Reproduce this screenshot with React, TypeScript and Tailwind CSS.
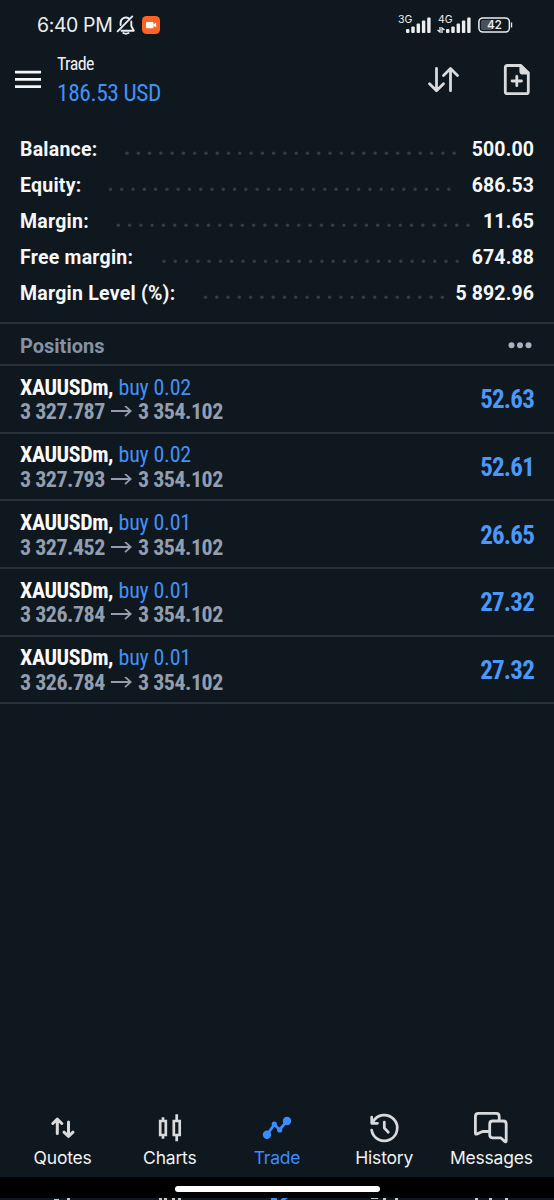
import type { ReactNode } from "react";

interface Stat {
  label: string;
  value: string;
}

interface Position {
  volume: string;
  open: string;
  current: string;
  profit: string;
}

const stats: Stat[] = [
  { label: "Balance:", value: "500.00" },
  { label: "Equity:", value: "686.53" },
  { label: "Margin:", value: "11.65" },
  { label: "Free margin:", value: "674.88" },
  { label: "Margin Level (%):", value: "5 892.96" },
];

const dots = [
  { start: 127, count: 30 },
  { start: 110.5, count: 31 },
  { start: 118.3, count: 32 },
  { start: 164, count: 27 },
  { start: 205.5, count: 22 },
];

const positions: Position[] = [
  { volume: "0.02", open: "3 327.787", current: "3 354.102", profit: "52.63" },
  { volume: "0.02", open: "3 327.793", current: "3 354.102", profit: "52.61" },
  { volume: "0.01", open: "3 327.452", current: "3 354.102", profit: "26.65" },
  { volume: "0.01", open: "3 326.784", current: "3 354.102", profit: "27.32" },
  { volume: "0.01", open: "3 326.784", current: "3 354.102", profit: "27.32" },
];

function Signal() {
  return (
    <svg className="h-4 w-[25px]" viewBox="0 0 25 16" fill="#eceef0">
      <rect x="0" y="12" width="3.4" height="4" rx="1" />
      <rect x="5.3" y="9.5" width="3.4" height="6.5" rx="1" />
      <rect x="10.6" y="6.5" width="3.4" height="9.5" rx="1" />
      <rect x="15.9" y="3.5" width="3.4" height="12.5" rx="1" />
      <rect x="21.2" y="0.5" width="3.4" height="15.5" rx="1" />
    </svg>
  );
}

function StatusBar() {
  return (
    <div className="flex h-[50px] items-center pl-[37px] text-[#eceef0]">
      <span className="mt-px w-[79px] font-[Inter,sans-serif] text-[19.5px] tracking-[-0.4px] whitespace-nowrap">
        6:40 PM
      </span>
      <svg className="h-5 w-5" viewBox="0 0 20 20" fill="none" stroke="#eceef0" strokeWidth="1.9" strokeLinecap="round" strokeLinejoin="round">
        <path d="M1.6 16.3 16.3 1.4M4.6 10V8A5.3 5.3 0 0 1 12.5 3.2M15.3 6.5V11l2.5 4.7H5.5" />
        <path d="M7.3 18q2.600 1.400 5.200 0" />
      </svg>
      <svg className="ml-[6px] h-[18px] w-[18px]" viewBox="0 0 18 18">
        <rect width="18" height="18" rx="4.5" fill="#fb6425" />
        <rect x="4" y="6" width="7.5" height="6.2" rx="1" fill="white" />
        <path d="m11.5 8.5 2.7-1.9v5l-2.7-1.9z" fill="white" />
      </svg>
      <div className="ml-[238px] flex items-center">
        <div className="relative h-4 w-[32px] pl-[8px]">
          <span className="absolute top-[-3px] left-0 font-[Inter,sans-serif] text-[10.5px] leading-3">3G</span>
          <Signal />
        </div>
        <div className="relative ml-[8px] h-4 w-[33px] pl-[8px]">
          <span className="absolute top-[-3px] left-0 font-[Inter,sans-serif] text-[10.5px] leading-3">4G</span>
          <svg className="absolute top-[10px] left-[-1px] h-[6px] w-[8px]" viewBox="0 0 8 6" fill="none" stroke="#eceef0" strokeWidth="1.3">
            <path d="M3 0v5L.5 3M5 6V1l2.5 2" />
          </svg>
          <Signal />
        </div>
        <svg className="ml-[7px] h-4 w-[36px]" viewBox="0 0 36 16">
          <rect x="3" y="3" width="11" height="10" rx="1.5" fill="#4b5057" />
          <rect x="0.9" y="0.9" width="30.5" height="14.2" rx="4" fill="none" stroke="#eceef0" strokeWidth="1.5" />
          <path d="M33 5.5h1.2v5H33z" fill="#eceef0" />
          <text x="16.3" y="12.2" textAnchor="middle" fontSize="12" fontWeight="500" letterSpacing="-0.4" fontFamily="Inter, sans-serif" fill="#eceef0">42</text>
        </svg>
      </div>
    </div>
  );
}

function Header() {
  return (
    <div className="flex h-[82px] items-start">
      <svg className="mt-[20px] ml-[15px] h-[20px] w-[26px]" viewBox="0 0 26 20" fill="#f5f6f7">
        <path d="M0 .8h26v2.8H0zM0 8h26v2.8H0zM0 15.2h26v2.8H0z" />
      </svg>
      <div className="ml-4 w-[360px] [font-stretch:75%] whitespace-nowrap">
        <div className="mt-[3px] text-[18px] leading-[22px] tracking-[-0.6px] text-[#eef0f2]">Trade</div>
        <div className="mt-[3px] text-[23.5px] leading-[30px] tracking-[-0.45px] text-[#4291f5]">186.53 USD</div>
      </div>
      <svg className="mt-[15px] ml-[10px] h-[30px] w-[34px]" viewBox="0 0 34 30" fill="none" stroke="#d9dadb" strokeWidth="2.8" strokeLinecap="round" strokeLinejoin="round">
        <path d="M9.5 3.5v22M2.5 18.8l7 6.9 7-6.9M23.5 25.7v-22M16.5 10.5l7-6.9 7 6.9" />
      </svg>
      <svg className="mt-[13px] ml-[42px] h-[34px] w-[28px]" viewBox="0 0 28 34" fill="none" stroke="#d9dadb" strokeWidth="2.8" strokeLinecap="round" strokeLinejoin="round">
        <path d="M4.3 2.5h13.5l7.5 7.3v18.900q0 2-2 2H4.300q-2 0-2-2V4.500q0-2 2-2z" />
        <path d="M17.800 3v5.200q0 2 2 2h5.200z" fill="#d9dadb" />
        <path d="M13.800 13.300v9.400M9.100 18h9.400" />
      </svg>
    </div>
  );
}

function StatRow({ stat, start, count }: { stat: Stat; start: number; count: number }) {
  return (
    <div className="relative flex h-9 items-center justify-between px-5 text-[19.5px] font-bold text-[#f6f7f8]">
      <span className="tracking-[0.24px]">{stat.label}</span>
      <svg className="absolute top-[19px] left-0 h-[6px] w-[480px]" fill="#353c45">
        {Array.from({ length: count }, (_, i) => (
          <circle key={i} cx={start + i * 11.28} cy="2.3" r="1.7" />
        ))}
      </svg>
      <span className="tracking-[0.1px]">{stat.value}</span>
    </div>
  );
}

function PositionRow({ position }: { position: Position }) {
  return (
    <div className="flex h-[67.7px] items-center justify-between border-b-2 border-[#28303a] pt-[2.6px] pr-5 pl-5 [font-stretch:75%]">
      <div className="text-[22px] leading-[24.5px] font-bold whitespace-nowrap">
        <div className="flex">
          <span className="w-[98.5px] tracking-[-0.42px] text-[#fafafa]">XAUUSDm,</span>
          <span className="font-normal tracking-[-0.2px] text-[#4291f5]">buy {position.volume}</span>
        </div>
        <div className="flex items-center tracking-[-0.5px] text-[#929eae]">
          <span className="w-[91px]">{position.open}</span>
          <svg className="mr-[6px] h-3 w-[21px]" viewBox="0 0 21 12" fill="none" stroke="currentColor" strokeWidth="1.8">
            <path d="M0 5h19.5M14 -.2 19.7 5 14 10.2" />
          </svg>
          <span>{position.current}</span>
        </div>
      </div>
      <span className="text-[25px] font-bold tracking-[-0.8px] text-[#4c98fa]">{position.profit}</span>
    </div>
  );
}

function NavItem({ label, active, children }: { label: string; active?: boolean; children: ReactNode }) {
  return (
    <div className={`flex w-[107.2px] flex-col items-center ${active ? "text-[#3b8cff]" : "text-[#d9dadb]"}`}>
      <svg className="h-9 w-10" viewBox="0 0 40 36" fill="none" stroke="currentColor" strokeWidth="2.8" strokeLinecap="round" strokeLinejoin="round">
        {children}
      </svg>
      <span className={`font-[Inter,sans-serif] text-[17.5px] leading-6 tracking-[-0.2px] ${active ? "" : "text-[#f1f2f3]"}`}>
        {label}
      </span>
    </div>
  );
}

function BottomNav() {
  return (
    <div className="flex h-[84px] justify-center pt-[16.5px]">
      <NavItem label="Quotes">
        <path d="M14.3 23.5V9.5M9.8 13.5l4.5-4.3 4.5 4.3M25.5 12v14M21 22.2l4.5 4.3 4.5-4.3" strokeWidth="3" />
      </NavItem>
      <NavItem label="Charts">
        <path d="M10.2 11h5.6v14h-5.6zM13 7.3v3.5M13 25.2v3.5M23.800 11h5.900v14h-5.900zM26.700 4.300v6.500M26.700 25.200v6" strokeWidth="2.7" strokeLinejoin="miter" strokeLinecap="butt" />
      </NavItem>
      <NavItem label="Trade" active>
        <path d="m10 24.7 7.3-10.2 5.4 5.2L30 11" />
        <circle cx="17.3" cy="14.2" r="1.2" fill="currentColor" />
        <circle cx="22.7" cy="20" r="1.2" fill="currentColor" />
        <circle cx="10" cy="24.7" r="2.8" fill="currentColor" />
        <circle cx="30" cy="11" r="2.8" fill="currentColor" />
      </NavItem>
      <NavItem label="History">
        <path d="M7.6 20A12.9 12.9 0 1 0 9 11.8M7.7 7v6.300h5.800M20.300 12v6l4 4.200" strokeWidth="2.7" />
      </NavItem>
      <NavItem label="Messages">
        <path d="M17 21.5H11.5l-5.8 2.600q-1.300.4-1.300-1V6.400q0-3 3-3h17.800q3 0 3 3v3.300" />
        <path d="M21.700 11h10.500q3 0 3 3v17q0 1.400-1.200.6l-4.300-3.800h-8q-3 0-3-3V14q0-3 3-3z" />
      </NavItem>
    </div>
  );
}

export default function App() {
  return (
    <div className="flex h-[1200px] w-[554px] flex-col overflow-hidden bg-[#0f171f] font-[Roboto,sans-serif]">
      <StatusBar />
      <Header />
      <div className="h-[190px]">
        {stats.map((stat, i) => (
          <StatRow key={stat.label} stat={stat} {...dots[i]} />
        ))}
      </div>
      <div className="flex h-[44px] items-center justify-between border-y-2 border-[#28303a] pt-[3px] pr-[22px] pl-5">
        <span className="text-[20px] font-bold text-[#8592a3]">Positions</span>
        <svg className="h-2 w-[24px]" viewBox="0 0 24 8" fill="#a9b2c0">
          <circle cx="3.5" cy="3.2" r="3" />
          <circle cx="12" cy="3.2" r="3" />
          <circle cx="20.5" cy="3.2" r="3" />
        </svg>
      </div>
      <div className="flex-1">
        {positions.map((position, i) => (
          <PositionRow key={i} position={position} />
        ))}
      </div>
      <BottomNav />
      {/* Gesture bar */}
      <div className="flex h-[21px] justify-center bg-black pt-[9px]">
        <div className="h-[6px] w-[205px] rounded-full bg-white" />
      </div>
      {/* Tops of the icons below the fold */}
      <svg className="h-[2px] w-full shrink-0 bg-[#0f171f]" viewBox="0 0 554 2" fill="#c5c7c9">
        <path d="M54 1h5v1h-5zM67 0h3v2h-3zM159 0h3v2h-3zM164 0h3v2h-3zM172 0h3v2h-3zM178 0h3v2h-3zM371 0h7v1h-7zM383 0h3v2h-3zM395 0h3v2h-3zM475 0h3v2h-3zM489 0h3v2h-3zM505 0h3v2h-3z" />
        <path d="M271 0h6v2h-6zM281 1l2-1h5l-3 2h-4z" fill="#3b8cff" />
      </svg>
    </div>
  );
}
